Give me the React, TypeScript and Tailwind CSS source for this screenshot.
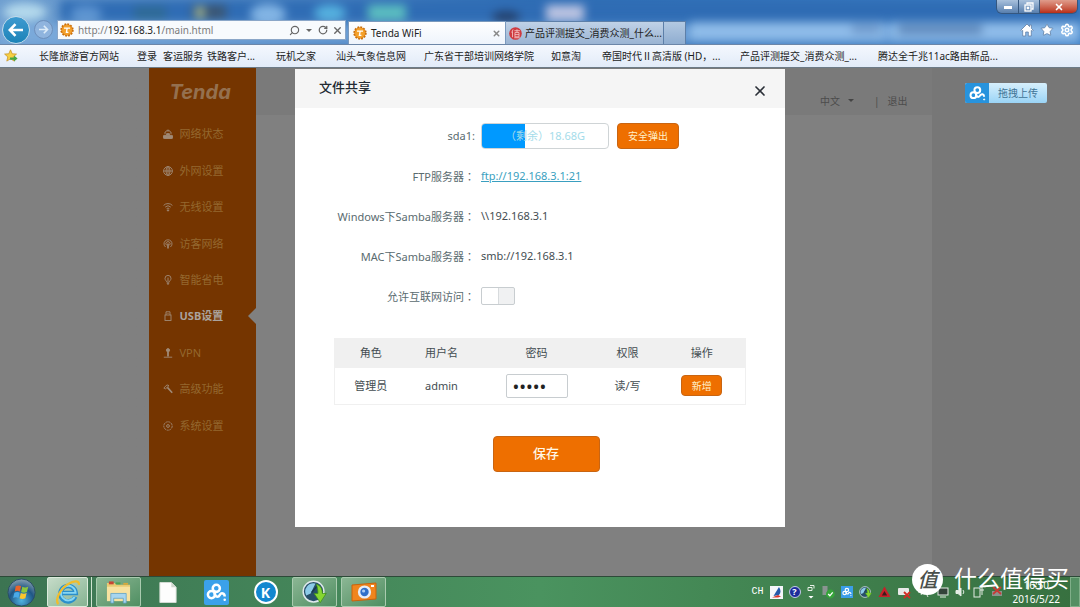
import { Settings, Star, X, RotateCw, Search } from 'lucide-react';
import type { ReactNode } from 'react';

const bookmarks = [
  { label: '长隆旅游官方网站', width: 'w-[98px]' },
  { label: '登录', width: 'w-[26px]' },
  { label: '客运服务', width: 'w-[44px]' },
  { label: '铁路客户...', width: 'w-[69px]' },
  { label: '玩机之家', width: 'w-[60px]' },
  { label: '汕头气象信息网', width: 'w-[88px]' },
  { label: '广东省干部培训网络学院', width: 'w-[127px]' },
  { label: '如意淘', width: 'w-[51px]' },
  { label: '帝国时代Ⅱ高清版 (HD，...', width: 'w-[138px]' },
  { label: '产品评测提交_消费众测_...', width: 'w-[138px]' },
  { label: '腾达全千兆11ac路由新品...', width: 'w-[138px]' },
];

const menu: { label: string; active?: boolean; icon: ReactNode }[] = [
  {
    label: '网络状态',
    icon: (
      <>
        <rect x="0.5" y="6.3" width="9" height="3.2" rx="0.6" fill="currentColor" />
        <path d="M3.6 6.3V4.6h2.8v1.7" fill="currentColor" />
        <path d="M2 3.2a4 4 0 0 1 6 0M2 3v2M8 3v2M3.6 1.4a4 4 0 0 1 2.8 0" />
      </>
    ),
  },
  {
    label: '外网设置',
    icon: (
      <>
        <circle cx="5" cy="5" r="4.4" />
        <ellipse cx="5" cy="5" rx="2" ry="4.4" />
        <path d="M0.6 5h8.8M5 0.6v8.8" />
      </>
    ),
  },
  {
    label: '无线设置',
    icon: (
      <>
        <path d="M0.6 3.4a6.2 6.2 0 0 1 8.8 0M2.2 5.1a4 4 0 0 1 5.6 0M3.6 6.7a2 2 0 0 1 2.8 0" />
        <circle cx="5" cy="8.4" r="0.7" fill="currentColor" />
      </>
    ),
  },
  {
    label: '访客网络',
    icon: (
      <>
        <path d="M2.6 8A4 4 0 1 1 7.4 8M3.6 6.3a2.1 2.1 0 1 1 2.8 0" />
        <path d="M5 4.5v5" strokeWidth="1.6" />
      </>
    ),
  },
  {
    label: '智能省电',
    icon: (
      <>
        <path d="M3.8 7.2C3.6 5.8 2 5.2 2 3.4a3 3 0 0 1 6 0c0 1.8-1.6 2.4-1.8 3.8z" />
        <path d="M3.8 8.4h2.4M4.4 9.6h1.2M5 2.6v4" />
      </>
    ),
  },
  {
    label: 'USB设置',
    active: true,
    icon: (
      <>
        <path d="M3 4V0.8h4V4" />
        <rect x="2" y="4" width="6" height="5.5" />
        <path d="M4.3 2.2v0.6M5.7 2.2v0.6" />
      </>
    ),
  },
  {
    label: 'VPN',
    icon: (
      <>
        <circle cx="5" cy="2.2" r="1.6" fill="currentColor" />
        <path d="M5 3.6v5" strokeWidth="1.8" />
        <path d="M0.8 9.2h8.4" />
      </>
    ),
  },
  {
    label: '高级功能',
    icon: (
      <>
        <path d="M0.8 4 4 0.9l2 0.7-3.4 3.2z" />
        <path d="M4.4 3.4 9.2 8.8" strokeWidth="1.6" />
      </>
    ),
  },
  {
    label: '系统设置',
    icon: (
      <>
        <circle cx="5" cy="5" r="4.2" strokeDasharray="2.2 0.6" />
        <circle cx="5" cy="5" r="1.4" />
      </>
    ),
  },
];

function TendaBadge() {
  return (
    <svg viewBox="0 0 14 14" className="size-[14px] shrink-0">
      <circle cx="7" cy="7" r="5.8" fill="#e98a17" stroke="#c96f0c" strokeWidth="1.8" strokeDasharray="1.8 1.2" />
      <circle cx="7" cy="7" r="4.9" fill="#f3a02c" />
      <path d="M4 5.2h6M7.2 5.2 6.4 9.4h2" stroke="#fff" strokeWidth="1.3" fill="none" />
    </svg>
  );
}

function CloudMark({ className }: { className: string }) {
  return (
    <svg viewBox="0 0 20 20" className={className} fill="none" stroke="#fff" strokeWidth="2.4">
      <circle cx="9.8" cy="6" r="3.4" />
      <circle cx="5.2" cy="12" r="3.4" />
      <path d="M8.2 10.2c0 4.6 3.6 4.6 5 2 1.4-2.4 4.6-1.6 4.6 1.6" />
      <circle cx="17.8" cy="17" r="0.7" fill="#fff" strokeWidth="1" />
    </svg>
  );
}

function SpeedMark({ className }: { className: string }) {
  return (
    <svg viewBox="0 0 26 26" className={className}>
      <circle cx="12" cy="12" r="10.8" fill="#274f68" stroke="#dfe9ec" strokeWidth="1.5" />
      <path d="M4.4 16A8.6 8.6 0 0 1 14 3.6L9 14z" fill="#8ccbe8" />
      <path d="M10 13 15.5 6.5" stroke="#17384c" strokeWidth="1.4" />
      <path d="M15 4.4c4 1 6.2 4.6 6.2 9.6h4L19 23.5 12.6 14h4c0-3.4-.6-6.4-1.6-9.6z" fill="#86d732" stroke="#3d8f1a" strokeWidth="0.8" />
    </svg>
  );
}

function BrowserBar() {
  return (
    <header className="relative overflow-hidden bg-linear-to-r from-[#6f9fd0] via-[#2e6db4] to-[#3f80c6]">
      <svg className="absolute inset-0 h-full w-full blur-[5px]" preserveAspectRatio="none" viewBox="0 0 1080 44" aria-hidden="true">
        <rect x="0" y="24" width="1080" height="24" fill="#86b3e2" opacity="0.6" />
        <rect x="60" y="0" width="1020" height="22" fill="#2f6cb4" />
        <ellipse cx="25" cy="12" rx="22" ry="9" fill="#b4d9ec" />
        <ellipse cx="86" cy="14" rx="16" ry="8" fill="#5e95d1" />
        <rect x="134" y="6" width="32" height="14" fill="#2f6a96" />
        <rect x="192" y="5" width="34" height="14" fill="#3b5672" />
        <rect x="196" y="7" width="8" height="11" fill="#b2c290" />
        <ellipse cx="268" cy="14" rx="18" ry="10" fill="#82b4e4" />
        <ellipse cx="330" cy="13" rx="16" ry="8" fill="#56b2e0" />
        <rect x="368" y="5" width="38" height="15" fill="#5cbfc0" />
        <ellipse cx="506" cy="17" rx="14" ry="6" fill="#23406c" />
        <rect x="546" y="5" width="38" height="16" fill="#bcc4e2" />
        <rect x="690" y="22" width="195" height="18" fill="#8fbce9" />
        <rect x="890" y="22" width="190" height="18" fill="#8fbce9" />
        <rect x="898" y="25" width="84" height="9" fill="#5c86b8" />
        <rect x="852" y="25" width="28" height="8" fill="#6c96c8" />
      </svg>

      <div className="relative flex h-[15px] items-start justify-end pr-0.5">
        <div className="flex h-[14px] overflow-hidden rounded-b-md border border-t-0 border-[#35577f]">
          <button aria-label="最小化" className="flex w-[22px] items-end justify-center border-r border-[#35577f] bg-linear-to-b from-[#a9c1dc] to-[#587fae] pb-1">
            <span className="h-[3px] w-2 bg-white" />
          </button>
          <button aria-label="还原" className="flex w-[21px] items-center justify-center border-r border-[#35577f] bg-linear-to-b from-[#a9c1dc] to-[#587fae]">
            <svg viewBox="0 0 10 10" className="size-[10px]" fill="none" stroke="#fff" strokeWidth="1.3">
              <path d="M3 2.5V1h6v6H7.5" />
              <rect x="1" y="3" width="6" height="6" />
              <rect x="3.4" y="5.4" width="1.2" height="1.2" />
            </svg>
          </button>
          <button aria-label="关闭" className="flex w-[37px] items-center justify-center bg-linear-to-b from-[#df9c8c] to-[#b92d16]">
            <X className="size-[10px] text-white" strokeWidth={4} />
          </button>
        </div>
      </div>

      <div className="relative flex h-[29px] items-end">
        <div className="flex h-full w-[57px] items-center gap-1 pl-0.5">
          <button aria-label="后退" className="flex size-[28px] items-center justify-center rounded-full border border-[#c3dbea] bg-linear-to-b from-[#3d9ad0] to-[#1a83b8]">
            <svg viewBox="0 0 16 14" className="h-[14px] w-[16px]" fill="none" stroke="#fff" strokeWidth="2.6">
              <path d="M15 7H2M7.5 1.2 1.8 7l5.7 5.8" />
            </svg>
          </button>
          <button aria-label="前进" className="flex size-[19px] items-center justify-center rounded-full border border-[#6d8fbb] bg-[#8fb4de]">
            <svg viewBox="0 0 16 14" className="h-[9px] w-[11px]" fill="none" stroke="#dcebf8" strokeWidth="2.6">
              <path d="M1 7h13M8.5 1.2 14.2 7l-5.7 5.8" />
            </svg>
          </button>
        </div>

        <div className="mb-1 flex h-[20px] w-[289px] items-center gap-1 border border-[#8aa6c8] bg-[#f7fafd] px-0.5">
          <TendaBadge />
          <span className="flex-1 text-[10px] leading-4 text-[#7b7b7b]">
            http://<span className="text-[#222]">192.168.3.1</span>/main.html
          </span>
          <Search className="size-[11px] -scale-x-100 text-[#666]" strokeWidth={2.5} />
          <span className="mx-0.5 border-x-[3px] border-t-[3px] border-x-transparent border-t-[#666]" />
          <RotateCw className="size-[10px] text-[#666]" strokeWidth={3} />
          <X className="size-[11px] text-[#666]" strokeWidth={3} />
        </div>

        <div className="ml-0.5 flex h-[23px] text-[10px] leading-4 text-[#222]">
          <div className="flex w-[158px] items-center gap-1 border border-b-0 border-[#7a99bd] bg-linear-to-b from-white to-[#eef4fc] px-1">
            <TendaBadge />
            <span className="flex-1 whitespace-nowrap">Tenda WiFi</span>
            <X className="size-[9px] text-[#888]" strokeWidth={4} />
          </div>
          <div className="flex w-[158px] items-center gap-[3px] overflow-hidden border border-l-0 border-b-0 border-[#5d7fa8] bg-linear-to-b from-[#c0d2e7] to-[#9ab4d3] px-[3px]">
            <svg viewBox="0 0 14 14" className="size-[13px] shrink-0">
              <circle cx="7" cy="7" r="6.8" fill="#cf3a3f" />
              <path d="M4.4 2.6 3 6M3.8 5v6M5.8 4h6M8.6 2.4v3M6.4 6h4.4v4.6H6.4zM6.4 8.2h4.4M5.6 11.6h6" stroke="#f5c9c9" strokeWidth="0.9" fill="none" />
            </svg>
            <span className="whitespace-nowrap">产品评测提交_消费众测_什么...</span>
          </div>
          <button aria-label="新选项卡" className="w-[22px] border border-l-0 border-b-0 border-[#5d7fa8] bg-linear-to-b from-[#b3c9e2] to-[#8fadd0]" />
        </div>

        <div className="ml-auto flex h-full items-center gap-[6px] pr-1.5 text-white">
          <svg viewBox="0 0 14 14" className="size-[14px]" fill="#fff" stroke="#5f7fa6" strokeWidth="0.8">
            <path d="M7 1 0.8 7.2l1 1 0.9-0.8V13h3V9h2.6v4h3V7.4l0.9 0.8 1-1L11.4 5.4V2H9.6v1.6z" />
          </svg>
          <Star className="size-[14px]" fill="#fff" stroke="#5f7fa6" strokeWidth={1.4} />
          <Settings className="size-[14px]" strokeWidth={2.6} />
        </div>
      </div>
    </header>
  );
}

function BookmarkBar() {
  return (
    <nav className="flex h-[24px] items-center overflow-hidden border-t border-b border-t-[#6c86a8] border-b-[#6d7b87] bg-linear-to-b from-[#f4f8fe] to-[#e2ebf8] text-[10px] leading-4 text-[#1c1c1c]">
      <div className="w-[39px] shrink-0 pl-1">
        <svg viewBox="0 0 14 14" className="size-[14px]">
          <path d="M6.5 0.8 8.2 4.8l4.3 0.3-3.3 2.8 1.1 4.2-3.8-2.3-3.7 2.3 1-4.2L0.6 5.1l4.2-0.3z" fill="#f6d043" stroke="#c9962a" strokeWidth="0.8" />
          <path d="M6 8.4h4V6.6l3.6 3-3.6 3v-1.8H6z" fill="#46a843" />
        </svg>
      </div>
      {bookmarks.map((item) => (
        <a key={item.label} href="#" className={`${item.width} shrink-0 whitespace-nowrap`}>
          {item.label}
        </a>
      ))}
    </nav>
  );
}

function Sidebar() {
  return (
    <aside className="w-[107px] shrink-0 bg-[#753500]">
      <div className="flex h-[48px] items-center pl-[21px]">
        <span className="font-['Inter',sans-serif] text-[20px] leading-6 font-bold text-[#94704f] italic">Tenda</span>
      </div>
      <nav className="flex h-[328px] flex-col text-[11px] leading-4">
        {menu.map((item) => (
          <a
            key={item.label}
            href="#"
            className={
              item.active
                ? 'relative flex flex-1 items-center gap-[7px] pl-[14px] font-bold text-[#aaa39d]'
                : 'flex flex-1 items-center gap-[7px] pl-[14px] text-[#94682f]'
            }
          >
            <svg viewBox="0 0 10 10" className="size-[10px] text-[#a08a76]" fill="none" stroke="currentColor" strokeWidth="0.9">
              {item.icon}
            </svg>
            {item.label}
            {item.active && (
              <svg viewBox="0 0 8 16" className="absolute right-0 h-4 w-2">
                <path d="M8 0v16L0 8z" fill="#808080" />
              </svg>
            )}
          </a>
        ))}
      </nav>
    </aside>
  );
}

// The TC face centres the full-width colon in its box
function Colon() {
  return <span className="font-['Noto_Sans_CJK_TC',sans-serif]">：</span>;
}

function FormRow({ label, children }: { label: ReactNode; children: ReactNode }) {
  return (
    <div className="flex h-10 items-center gap-[6px]">
      <div className="w-[180px] text-right whitespace-nowrap text-[#5a6b6f]">{label}</div>
      {children}
    </div>
  );
}

function ShareDialog() {
  const used = 34;
  return (
    <section role="dialog" aria-label="文件共享" className="w-[490px] bg-white pb-[55px] text-[11px] leading-4 text-[#444d52]">
      <div className="flex h-[39px] items-start justify-between bg-[#f5f5f5] pt-2 pr-[17px] pl-6">
        <h1 className="text-[13px] leading-5 font-medium text-[#222b33]">文件共享</h1>
        <button aria-label="关闭" className="pt-1.5">
          <X className="size-[16px] text-[#2b3038]" strokeWidth={2.5} />
        </button>
      </div>

      <div className="pt-2">
        <FormRow label="sda1:">
          <div role="progressbar" aria-valuenow={used} aria-label="sda1" className="relative h-[26px] w-[128px] overflow-hidden rounded-sm border border-[#cfd4d6]">
            <div className="h-full bg-[#0099ff]" style={{ width: `${used}%` }} />
            <span className="absolute inset-0 flex items-center justify-center whitespace-nowrap text-[#a5dcea]">（剩余）18.68G</span>
          </div>
          <button className="ml-0.5 h-[26px] w-[62px] rounded-sm border border-[#c96512] bg-[#ee6f00] text-[10px] text-[#fff0c8]">安全弹出</button>
        </FormRow>
        <FormRow label={<>FTP服务器<Colon /></>}>
          <a href="ftp://192.168.3.1:21" className="text-[#3a9fc0] underline">ftp://192.168.3.1:21</a>
        </FormRow>
        <FormRow label={<>Windows下Samba服务器<Colon /></>}>
          <span>\\192.168.3.1</span>
        </FormRow>
        <FormRow label={<>MAC下Samba服务器<Colon /></>}>
          <span>smb://192.168.3.1</span>
        </FormRow>
        <FormRow label={<label htmlFor="internet">允许互联网访问<Colon /></label>}>
          <input
            id="internet"
            type="checkbox"
            className="h-[18px] w-[34px] appearance-none rounded-xs border border-[#c8cdd0] bg-linear-to-r from-white from-50% via-[#c8cdd0] via-50% to-[#f0f1f2] to-54%"
          />
        </FormRow>
      </div>

      <table className="mx-auto mt-[22px] w-[412px] table-fixed border border-[#f0f0f0] text-center">
        <thead>
          <tr className="h-[29px] bg-[#f0f0f0]">
            <th className="w-[72px] font-normal">角色</th>
            <th className="w-[70px] font-normal">用户名</th>
            <th className="w-[120px] font-normal">密码</th>
            <th className="w-[62px] font-normal">权限</th>
            <th className="font-normal">操作</th>
          </tr>
        </thead>
        <tbody>
          <tr className="h-[37px]">
            <td>管理员</td>
            <td>admin</td>
            <td>
              <input
                type="password"
                aria-label="密码"
                defaultValue="admin"
                className="mx-auto block h-[24px] w-[62px] rounded-xs border border-[#c8cdd0] px-1.5 text-[18px] text-[#222]"
              />
            </td>
            <td>读/写</td>
            <td>
              <button className="mx-auto block h-[21px] w-[41px] rounded-sm border border-[#c96512] bg-[#ee6f00] text-[10px] text-[#fff0c8]">新增</button>
            </td>
          </tr>
        </tbody>
      </table>

      <div className="mt-[31px] flex justify-center pl-3">
        <button className="h-[36px] w-[107px] rounded-sm border border-[#c96512] bg-[#ee6f00] pb-0.5 text-[13px] font-medium text-[#fff8e6]">保存</button>
      </div>
    </section>
  );
}

function TaskSlot({ label, framed, active, children }: { label: string; framed?: boolean; active?: boolean; children: ReactNode }) {
  return (
    <button
      aria-label={label}
      className={
        active
          ? 'flex h-[30px] w-[41px] items-center justify-center rounded-xs border border-[#dcebdc] bg-linear-to-br from-[#c6dcc9] to-[#86b392]'
          : framed
            ? 'flex h-[30px] w-[45px] items-center justify-center rounded-xs border border-[#a9cbaf] bg-linear-to-br from-[#8bb694] to-[#4f8f62]'
            : 'flex h-[30px] w-[45px] items-center justify-center'
      }
    >
      {children}
    </button>
  );
}

function Taskbar() {
  return (
    <footer className="flex h-[31px] items-center border-t border-[#2c4a38] bg-linear-to-r from-[#3c7452] via-[#4a935f] to-[#37703f]">
      <div className="flex items-center gap-1">
        <button aria-label="开始" className="flex w-[43px] justify-center">
          <svg viewBox="0 0 30 30" className="size-[29px]">
            <defs>
              <radialGradient id="orb" cx="50%" cy="80%" r="75%">
                <stop offset="0" stopColor="#4fb3e0" />
                <stop offset="0.6" stopColor="#1f5685" />
                <stop offset="1" stopColor="#7b97ab" />
              </radialGradient>
            </defs>
            <circle cx="15" cy="15" r="14" fill="url(#orb)" stroke="#2b4d66" />
            <path d="M9 8.5c2-1.2 4-1 5.6 0L13.4 14c-1.8-1-3.6-1-5.4 0z" fill="#e8632a" />
            <path d="M15.8 9c2 1 4 1 6.2 0l-1.4 5.4c-2 1-4 1-6 0z" fill="#8cc63e" />
            <path d="M7.6 15.2c2-1.1 3.8-1 5.5 0L11.8 20.6c-1.8-1-3.6-1-5.4 0z" fill="#4aa9e8" />
            <path d="M14.3 15.6c2 1 4 1 6 0L19 21c-2 1-4 1-6 0z" fill="#fcc62d" />
          </svg>
        </button>
        <TaskSlot label="Internet Explorer" active>
          <svg viewBox="0 0 28 28" className="size-[27px]" fill="none">
            <path d="M22 18.4A8 8 0 1 1 22.6 14.6H8" stroke="#2a8fcb" strokeWidth="4.6" />
            <path d="M21.4 18.4A7.6 7.6 0 1 1 22.4 14.4H9" stroke="#86d6f4" strokeWidth="2" />
            <path d="M4.5 26C0.5 22 6.5 10.5 14 5.6 20 2 26.4 0.8 25.8 6" stroke="#f0bd2c" strokeWidth="2.4" />
          </svg>
        </TaskSlot>
        <div className="-ml-0.5 h-[30px] w-[2px] border-r border-[#cfe3d0]" />
        <TaskSlot label="文件夹" framed>
          <svg viewBox="0 0 28 26" className="h-[25px] w-[27px]">
            <path d="M2 3h8l2 2h14v16H2z" fill="#e9cb72" />
            <path d="M4 1.5h5v3H4z" fill="#c74634" />
            <path d="M11 2.5h5v2h-5z" fill="#4aa352" />
            <path d="M19 3h5v2h-5z" fill="#d6a93c" />
            <path d="M2 7h24v15H2z" fill="#f7e2a0" />
            <path d="M6 14h16v10h-3v-5H9v5H6z" fill="#a7d5ee" stroke="#5c9fc6" strokeWidth="0.8" />
          </svg>
        </TaskSlot>
        <TaskSlot label="文档">
          <svg viewBox="0 0 18 22" className="h-[21px] w-[18px]">
            <path d="M0.5 0.5h12l5 5v16h-17z" fill="#fdfdfd" stroke="#d5dcd5" />
            <path d="M12.5 0.5v5h5z" fill="#cfd8cf" />
          </svg>
        </TaskSlot>
        <TaskSlot label="百度云">
          <span className="flex size-[25px] items-center justify-center rounded-xs bg-[#3ba1ea]">
            <CloudMark className="size-[21px]" />
          </span>
        </TaskSlot>
        <TaskSlot label="酷狗音乐">
          <span className="flex size-[24px] items-center justify-center rounded-full border-2 border-white bg-[#1287cf] text-[14px] font-bold text-white">K</span>
        </TaskSlot>
        <TaskSlot label="下载" framed>
          <SpeedMark className="size-[25px]" />
        </TaskSlot>
        <TaskSlot label="相机" framed>
          <svg viewBox="0 0 26 20" className="h-[20px] w-[26px]">
            <path d="M1 3 25 1v16L1 19z" fill="#f0851d" stroke="#c9620c" />
            <circle cx="13.5" cy="10" r="6.6" fill="#e7edf6" />
            <circle cx="13.5" cy="10" r="4.2" fill="#2f6fc9" />
            <circle cx="12.6" cy="9" r="1.6" fill="#a8cbf5" />
            <rect x="20" y="3" width="3" height="2" fill="#fff" />
          </svg>
        </TaskSlot>
      </div>

      <div className="ml-auto flex h-full items-center gap-[6px] text-[10px] leading-[14px] text-white">
        <span className="font-['Liberation_Mono',monospace] text-[10px]">CH</span>
        <svg viewBox="0 0 13 13" className="size-[13px]">
          <rect width="13" height="13" fill="#f4f6fa" />
          <path d="M9 1c2 3 2 6 0 8L3.5 10z" fill="#2457a8" />
          <path d="M2 11.4 8 9l3 1.4-3 1.2z" fill="#d8342b" />
        </svg>
        <span className="flex size-[12px] items-center justify-center rounded-full border border-[#c5cbe8] bg-[#1d2c9a] text-[9px] font-bold">?</span>
        <svg viewBox="0 0 8 16" className="h-4 w-2" fill="none" stroke="#e8f0e8">
          <path d="M3 1.5h4v3M1 3.5h4v3H1z" />
          <path d="M1.5 12h5L4 14.5z" fill="#fff" stroke="none" />
        </svg>
        <svg viewBox="0 0 14 14" className="size-[14px]">
          <rect x="1.5" y="1" width="5" height="9" fill="#8a9491" />
          <circle cx="9.4" cy="9" r="4.4" fill="#36a53a" />
          <path d="m7.2 9 1.7 1.8 2.8-3.4" stroke="#fff" strokeWidth="1.3" fill="none" />
        </svg>
        <span className="flex size-[12px] items-center justify-center bg-[#3b9ee8]">
          <CloudMark className="size-[10px]" />
        </span>
        <SpeedMark className="size-[13px]" />
        <svg viewBox="0 0 13 12" className="h-3 w-[13px]">
          <path d="M6.5 0.5 12.5 11h-12z" fill="#c6202a" />
          <path d="m6.5 5 2.6 4.6H3.9z" fill="#3c1c1c" />
        </svg>
        <svg viewBox="0 0 14 13" className="h-[13px] w-[14px]">
          <rect x="1" y="2" width="11" height="7" rx="1" fill="#e9e9e9" />
          <path d="m7 6 6 6M13 6l-6 6" stroke="#d22d25" strokeWidth="1.8" />
        </svg>
        <svg viewBox="0 0 14 13" className="h-[13px] w-[14px]" fill="none" stroke="#dfe6df">
          <path d="M1 6h12M4 9l3-6 4 8" />
        </svg>
        <svg viewBox="0 0 12 12" className="size-3" fill="#33433a" stroke="#e4ece4">
          <rect x="1" y="2" width="10" height="7" />
          <path d="M3 11h6" />
        </svg>
        <svg viewBox="0 0 12 12" className="size-3" fill="none" stroke="#e4ece4">
          <path d="M1 4.5h2L6 2v8L3 7.5H1z" fill="#e4ece4" />
          <path d="M8 4a3 3 0 0 1 0 4" />
        </svg>
        <svg viewBox="0 0 12 12" className="size-3" fill="none" stroke="#e4ece4">
          <rect x="1" y="2" width="6" height="9" />
          <path d="M7 4h4M9 1v8" />
        </svg>
        <svg viewBox="0 0 12 12" className="size-3">
          <rect x="1" y="5" width="10" height="5" fill="#8b938d" />
          <path d="m2 1 8 7M10 1 2 8" stroke="#c73a35" strokeWidth="1.8" />
        </svg>
        <div className="mx-1 flex flex-col items-center">
          <span>16:50</span>
          <span>2016/5/22</span>
        </div>
        <button aria-label="显示桌面" className="h-full w-[10px] border border-[#7fae88] bg-[#548f63]" />
      </div>
    </footer>
  );
}

export default function App() {
  return (
    <div className="relative flex min-h-screen flex-col overflow-hidden bg-[#808080] font-['Noto_Sans','Noto_Sans_CJK_SC',sans-serif]">
      <BrowserBar />
      <BookmarkBar />

      <main className="relative flex flex-1 flex-col bg-linear-to-r from-[#808080] from-50% to-[#777777] to-50%">
        <div className="mx-auto flex w-[783px] flex-1 bg-[#808080]">
          <Sidebar />
          <div className="flex-1">
            <div className="flex h-[47px] items-center justify-end gap-5 bg-[#7a7a7a] pt-[18px] pr-6 text-[10px] leading-4 text-[#4c4c4c]">
              <button className="flex items-center gap-2">
                中文
                <span className="border-x-[3px] border-t-[3px] border-x-transparent border-t-[#444]" />
              </button>
              <div className="flex gap-2">
                <span>|</span>
                <a href="#">退出</a>
              </div>
            </div>
          </div>
        </div>

        {/* Dialog on top of the dimmed page */}
        <div className="absolute inset-0 flex items-start justify-center pt-px">
          <ShareDialog />
        </div>

        {/* Floating upload widget */}
        <button className="absolute top-[15px] right-[33px] flex h-[20px] w-[82px] overflow-hidden rounded-xs bg-linear-to-b from-[#d6effc] to-[#9ad4f6] text-[10px] leading-5 text-[#3f7496]">
          <span className="flex h-full w-[24px] items-center justify-center bg-[#2793dd]">
            <CloudMark className="size-[17px]" />
          </span>
          <span className="flex-1 text-center">拖拽上传</span>
        </button>
      </main>

      <Taskbar />

      {/* Watermark */}
      <div className="absolute right-[11px] bottom-[11px] flex items-center gap-[11px] text-white">
        <span className="flex size-[31px] items-center justify-center rounded-full bg-white font-['Noto_Sans_CJK_SC',sans-serif] text-[20px] leading-none font-medium text-[#4a4f4b] italic">值</span>
        <span className="pb-0.5 text-[23px] leading-8">什么值得买</span>
      </div>
    </div>
  );
}
